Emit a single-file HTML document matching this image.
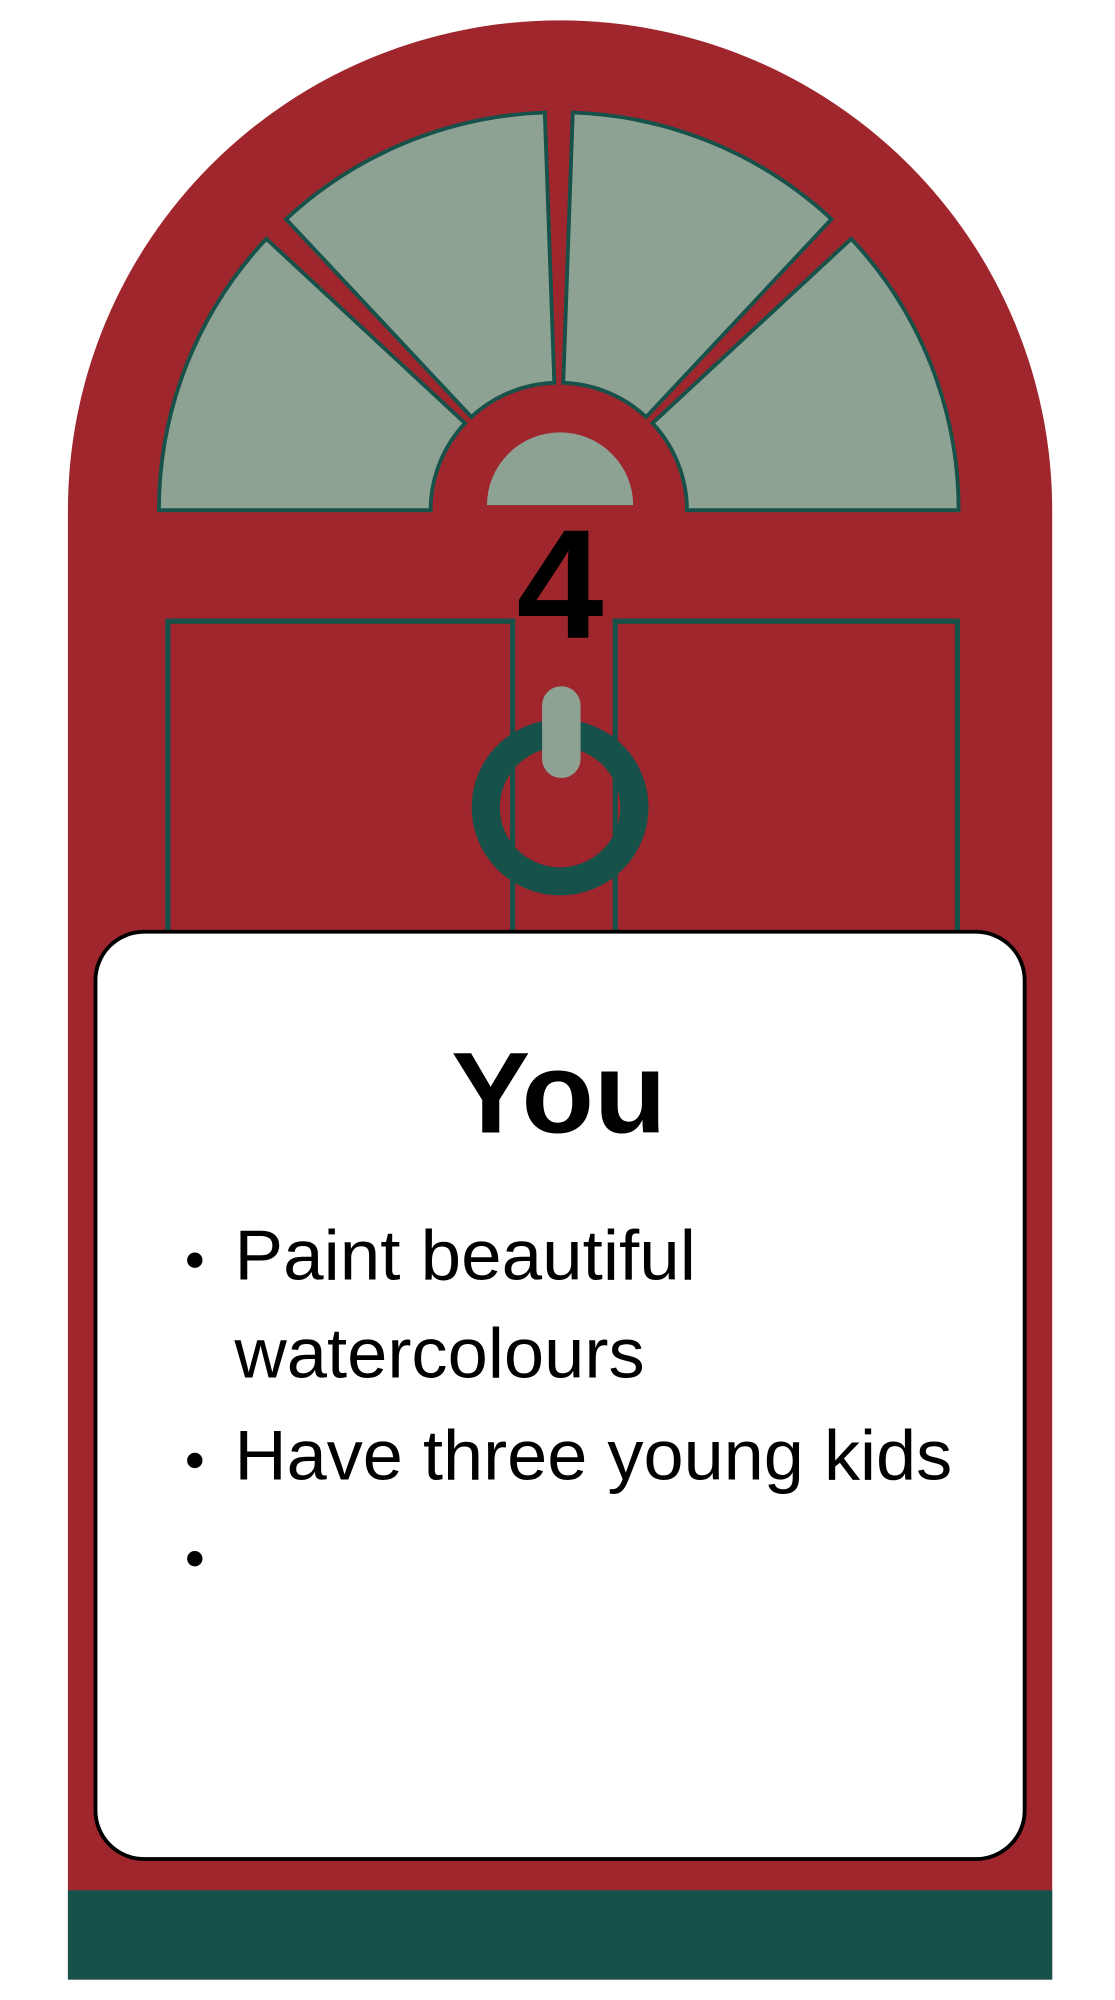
<!DOCTYPE html>
<html><head><meta charset="utf-8"><style>
html,body{margin:0;padding:0;background:#fff;width:1115px;height:2000px;overflow:hidden}
svg{display:block}
text{font-family:"Liberation Sans",sans-serif}
</style></head><body>
<svg width="1115" height="2000" viewBox="0 0 870 1568" preserveAspectRatio="none">
<path d="M53 1552 L53 400 A384 384 0 0 1 821 400 L821 1552 Z" fill="#9f262c"/>
<rect x="53" y="1482" width="768" height="70" fill="#16524a"/>
<g fill="#8ea293" stroke="#16524a" stroke-width="3">
<path d="M124 400 A312 312 0 0 1 207.8 187.2 L362.9 331.8 A100 100 0 0 0 336 400 Z"/>
<path d="M223.2 171.8 A312 312 0 0 1 425.1 88.2 L432.5 300.1 A100 100 0 0 0 367.8 326.9 Z"/>
<path d="M446.9 88.2 A312 312 0 0 1 648.8 171.8 L504.2 326.9 A100 100 0 0 0 439.5 300.1 Z"/>
<path d="M664.2 187.2 A312 312 0 0 1 748 400 L536 400 A100 100 0 0 0 509.1 331.8 Z"/>
</g>
<path d="M380 396 A57 57 0 0 1 494 396 Z" fill="#8ea293"/>
<g fill="none" stroke="#16524a" stroke-width="4">
<path d="M131 740 L131 487 L400 487 L400 740"/>
<path d="M480 740 L480 487 L747 487 L747 740"/>
</g>
<text x="437" y="500" font-size="122" font-weight="bold" text-anchor="middle" fill="#000">4</text>
<circle cx="437" cy="633" r="58" fill="none" stroke="#16524a" stroke-width="22"/>
<rect x="423" y="538" width="30" height="72" rx="15" fill="#8ea293"/>
<rect x="74.5" y="730.5" width="725" height="727" rx="38" fill="#fff" stroke="#000" stroke-width="3"/>
<text x="436" y="888" font-size="90" font-weight="bold" text-anchor="middle" fill="#000" textLength="168" lengthAdjust="spacingAndGlyphs">You</text>
<g font-size="55" fill="#000">
<circle cx="152" cy="988" r="6"/><text x="183" y="1003" textLength="360" lengthAdjust="spacingAndGlyphs">Paint beautiful</text>
<text x="183" y="1080" textLength="320" lengthAdjust="spacingAndGlyphs">watercolours</text>
<circle cx="152" cy="1145" r="6"/><text x="183" y="1160" textLength="560" lengthAdjust="spacingAndGlyphs">Have three young kids</text>
<circle cx="152" cy="1222" r="6"/>
</g>
</svg>
</body></html>
